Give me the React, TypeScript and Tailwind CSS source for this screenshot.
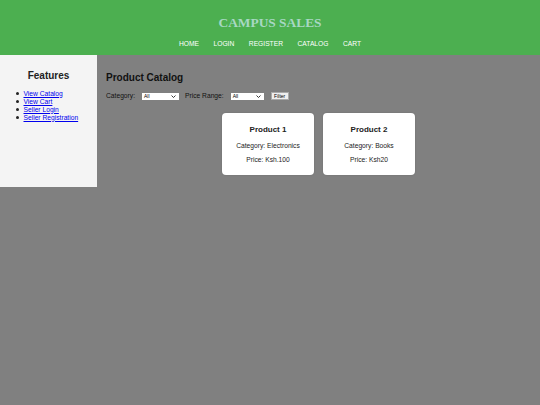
import type { ReactNode } from 'react'

const NAV = ['HOME', 'LOGIN', 'REGISTER', 'CATALOG', 'CART']

const FEATURES = ['View Catalog', 'View Cart', 'Seller Login', 'Seller Registration']

const PRODUCTS = [
  { name: 'Product 1', category: 'Electronics', price: 'Ksh.100' },
  { name: 'Product 2', category: 'Books', price: 'Ksh20' },
]

function FakeSelect({ width }: { width: string }) {
  return (
    <div
      className={`${width} flex h-[7px] items-center justify-between bg-white pl-[2px] pr-[3px] text-[5px] leading-none text-black`}
    >
      <span>All</span>
      <svg width="5" height="3" viewBox="0 0 5 3" aria-hidden="true">
        <path d="M0.5 0.5L2.5 2.5L4.5 0.5" fill="none" stroke="#222" strokeWidth="0.9" />
      </svg>
    </div>
  )
}

function Card({ children }: { children: ReactNode }) {
  return (
    <div className="flex h-[62px] w-[92px] flex-col items-center rounded-[4px] bg-white pt-[12px] text-center text-[#222] shadow-[0_0_2px_rgba(0,0,0,0.15)]">
      {children}
    </div>
  )
}

export default function App() {
  return (
    <div className="h-[405px] w-[540px] overflow-hidden bg-[#808080] font-['Liberation_Sans',Arial,sans-serif]">
      <header className="flex h-[55px] flex-col items-center bg-[#4caf50] pt-[15px]">
        <h1 className="font-['Liberation_Serif','Times_New_Roman',serif] text-[13.4px] font-bold leading-[16px] text-[#a8d8c4]">
          CAMPUS SALES
        </h1>
        <nav className="mt-[9px] flex gap-[14.5px] text-[6.7px] leading-[8px] text-white">
          {NAV.map((item) => (
            <a key={item} href="#">
              {item}
            </a>
          ))}
        </nav>
      </header>

      <div className="flex">
        <aside className="h-[132px] w-[97px] shrink-0 bg-[#f4f4f4] pt-[14.5px]">
          <h2 className="text-center text-[10px] font-bold leading-[12px] text-[#222]">Features</h2>
          <ul className="mt-[8px] pl-[16px] text-[6.7px] leading-[8px] text-black">
            {FEATURES.map((f) => (
              <li key={f} className="flex items-center">
                <span className="mr-[5px] h-[2.5px] w-[2.5px] rounded-full bg-[#222]" />
                <a href="#" className="text-[#0000ee] underline">
                  {f}
                </a>
              </li>
            ))}
          </ul>
        </aside>

        <main className="flex-1 px-[9px] pt-[16.7px]">
          <h2 className="text-[10px] font-bold leading-[12px] text-[#111]">Product Catalog</h2>
          <div className="mt-[8.6px] flex h-[8px] items-center text-[6.7px] leading-[8px] text-[#111]">
            <span>Category:</span>
            <div className="ml-[7px]">
              <FakeSelect width="w-[37px]" />
            </div>
            <span className="ml-[6px]">Price Range:</span>
            <div className="ml-[7px]">
              <FakeSelect width="w-[33px]" />
            </div>
            <button
              type="button"
              className="ml-[7px] flex h-[8px] w-[18px] items-center justify-center border border-[#aaa] bg-[#efefef] text-[5px] leading-none text-black"
            >
              Filter
            </button>
          </div>

          <div className="mt-[12.7px] flex justify-center gap-[9px]">
            {PRODUCTS.map((p) => (
              <Card key={p.name}>
                <h3 className="text-[8px] font-bold leading-[9px]">{p.name}</h3>
                <p className="mt-[8px] text-[6.7px] leading-[8px]">Category: {p.category}</p>
                <p className="mt-[6px] text-[6.7px] leading-[8px]">Price: {p.price}</p>
              </Card>
            ))}
          </div>
        </main>
      </div>
    </div>
  )
}
